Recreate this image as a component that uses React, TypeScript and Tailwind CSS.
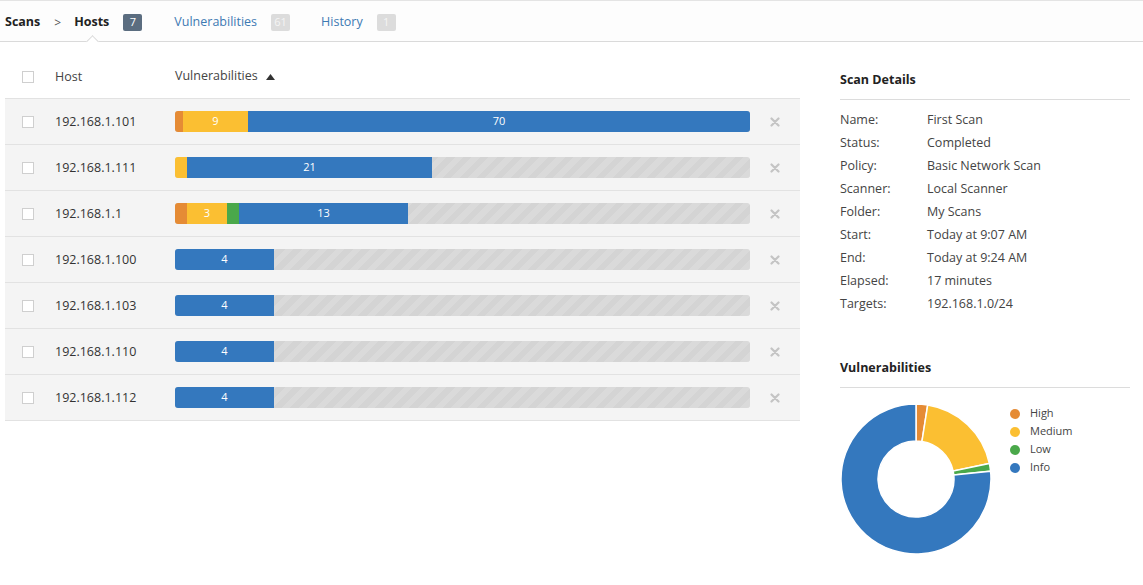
import React from 'react';

type Seg = { color: string; w: number; label?: string };
type Host = { ip: string; segs: Seg[] };

const HIGH = '#e58b35';
const MED = '#fbbf32';
const LOW = '#4aa84a';
const INFO = '#3478be';

const hosts: Host[] = [
  { ip: '192.168.1.101', segs: [{ color: HIGH, w: 8 }, { color: MED, w: 65, label: '9' }, { color: INFO, w: 502, label: '70' }] },
  { ip: '192.168.1.111', segs: [{ color: MED, w: 12 }, { color: INFO, w: 245, label: '21' }] },
  { ip: '192.168.1.1', segs: [{ color: HIGH, w: 12 }, { color: MED, w: 40, label: '3' }, { color: LOW, w: 12 }, { color: INFO, w: 169, label: '13' }] },
  { ip: '192.168.1.100', segs: [{ color: INFO, w: 99, label: '4' }] },
  { ip: '192.168.1.103', segs: [{ color: INFO, w: 99, label: '4' }] },
  { ip: '192.168.1.110', segs: [{ color: INFO, w: 99, label: '4' }] },
  { ip: '192.168.1.112', segs: [{ color: INFO, w: 99, label: '4' }] },
];

const details = [
  ['Name:', 'First Scan'],
  ['Status:', 'Completed'],
  ['Policy:', 'Basic Network Scan'],
  ['Scanner:', 'Local Scanner'],
  ['Folder:', 'My Scans'],
  ['Start:', 'Today at 9:07 AM'],
  ['End:', 'Today at 9:24 AM'],
  ['Elapsed:', '17 minutes'],
  ['Targets:', '192.168.1.0/24'],
];

const slices = [
  { color: HIGH, from: 0, to: 9 },
  { color: MED, from: 9, to: 78 },
  { color: LOW, from: 78, to: 84 },
  { color: INFO, from: 84, to: 360 },
];

const arc = (from: number, to: number, r1: number, r2: number, cx: number, cy: number) => {
  const p = (a: number, r: number) => {
    const rad = ((a - 90) * Math.PI) / 180;
    return `${cx + r * Math.cos(rad)} ${cy + r * Math.sin(rad)}`;
  };
  const large = to - from > 180 ? 1 : 0;
  return `M ${p(from, r2)} A ${r2} ${r2} 0 ${large} 1 ${p(to, r2)} L ${p(to, r1)} A ${r1} ${r1} 0 ${large} 0 ${p(from, r1)} Z`;
};

const Checkbox = () => <span className="block w-[12px] h-[12px] border border-[#cfcfcf] bg-white" />;

const Donut = () => (
  <svg width="152" height="152" viewBox="0 0 152 152">
    {slices.map((s) => (
      <path key={s.color} d={arc(s.from, s.to, 38, 75, 76, 76)} fill={s.color} stroke="#fff" strokeWidth="1.5" />
    ))}
  </svg>
);

const App: React.FC = () => {
  return (
    <div className="w-[1143px] h-[585px] bg-white text-[12.5px] text-[#333] font-['Open_Sans',sans-serif] overflow-hidden">
      {/* Breadcrumb / tabs */}
      <div className="relative h-[42px] border-t border-[#e4e4e4] border-b border-b-[#dadada] bg-[#fdfdfd] flex items-center pl-[5px] pt-[3px]">
        <span className="font-bold text-[#222]">Scans</span>
        <span className="ml-[14px] text-[#555] text-[12px]">&gt;</span>
        <span className="ml-[13px] font-bold text-[#222]">Hosts</span>
        <span className="ml-[14px] w-[19px] h-[17px] rounded-[2px] bg-[#5b6d80] text-white text-[11px] flex items-center justify-center">7</span>
        <span className="ml-[32px] text-[#3d7ab3]">Vulnerabilities</span>
        <span className="ml-[14px] w-[19px] h-[17px] rounded-[2px] bg-[#dcdcdc] text-[#f5f5f5] text-[11px] flex items-center justify-center">61</span>
        <span className="ml-[31px] text-[#3d7ab3]">History</span>
        <span className="ml-[14px] w-[19px] h-[17px] rounded-[2px] bg-[#dcdcdc] text-[#f5f5f5] text-[11px] flex items-center justify-center">1</span>
        <span className="absolute left-[88px] bottom-[-5px] w-[9px] h-[9px] rotate-45 bg-white border-l border-t border-[#dadada]" />
      </div>

      <div className="flex">
        {/* Hosts table */}
        <div className="w-[795px] ml-[5px] mt-[13px]">
          <div className="h-[43px] flex items-center">
            <div className="w-[50px] pl-[17px]"><Checkbox /></div>
            <div className="w-[120px] text-[#444] pt-[1px]">Host</div>
            <div className="flex items-center text-[#444]">
              Vulnerabilities
              <svg width="9" height="6" viewBox="0 0 9 6" className="ml-[8px]"><path d="M0 6 L4.5 0 L9 6 Z" fill="#333" /></svg>
            </div>
          </div>
          <div className="border-b border-[#e2e2e2]">
            {hosts.map((h) => (
              <div key={h.ip} className="h-[46px] flex items-center bg-[#f4f4f4] border-t border-[#e2e2e2]">
                <div className="w-[50px] pl-[17px]"><Checkbox /></div>
                <div className="w-[120px] text-[#333] pt-[2px]">{h.ip}</div>
                <div className="w-[575px] h-[21px] rounded-[3px] overflow-hidden flex bg-[repeating-linear-gradient(135deg,#d4d4d4_0px,#d4d4d4_6px,#dadada_6px,#dadada_12px)]">
                  {h.segs.map((s, i) => (
                    <div
                      key={i}
                      className="h-full flex items-center justify-center text-white text-[11px] shrink-0"
                      style={{ width: s.w, background: s.color }}
                    >
                      {s.label}
                    </div>
                  ))}
                </div>
                <div className="ml-[18px] w-[14px] flex justify-center">
                  <svg width="10" height="10" viewBox="0 0 10 10">
                    <path d="M1.5 1.5 L8.5 8.5 M8.5 1.5 L1.5 8.5" stroke="#c4c4c4" strokeWidth="2.2" strokeLinecap="round" />
                  </svg>
                </div>
              </div>
            ))}
          </div>
        </div>

        {/* Side panel */}
        <div className="ml-[40px] w-[290px] mt-[29px]">
          <div className="font-bold text-[#222] pb-[9px] border-b border-[#dcdcdc]">Scan Details</div>
          <div className="mt-[9px]">
            {details.map(([k, v]) => (
              <div key={k} className="h-[23px] flex items-center">
                <span className="w-[87px] text-[#444]">{k}</span>
                <span className="text-[#444]">{v}</span>
              </div>
            ))}
          </div>
          <div className="mt-[43px] font-bold text-[#222] pb-[9px] border-b border-[#dcdcdc]">Vulnerabilities</div>
          <div className="flex mt-[15px]">
            <Donut />
            <div className="ml-[18px] mt-[2px] text-[11px] text-[#444]">
              {[['High', HIGH], ['Medium', MED], ['Low', LOW], ['Info', INFO]].map(([n, c]) => (
                <div key={n} className="h-[18px] flex items-center">
                  <span className="w-[10px] h-[10px] rounded-full mr-[10px]" style={{ background: c }} />
                  {n}
                </div>
              ))}
            </div>
          </div>
        </div>
      </div>
    </div>
  );
};

export default App;
